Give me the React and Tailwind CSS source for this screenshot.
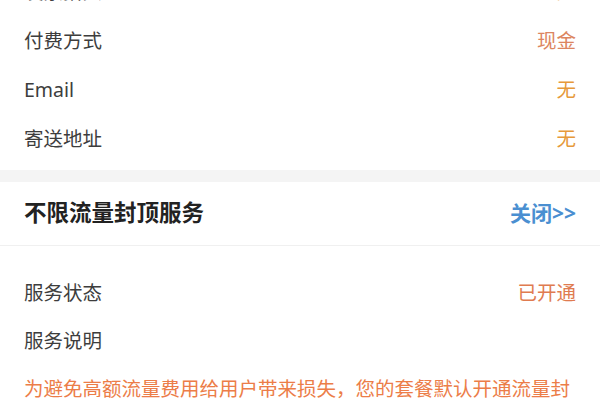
const rows = [
  { label: '发票抬头', value: '无', tone: 'text-[#e6993a]' },
  { label: '付费方式', value: '现金', tone: 'text-[#dc8560]' },
  { label: 'Email', value: '无', tone: 'text-[#e6993a]' },
  { label: '寄送地址', value: '无', tone: 'text-[#e6993a]' },
];

function Row({ label, value, tone, h = 'h-[49px]' }) {
  return (
    <div className={`flex items-center justify-between px-6 ${h}`}>
      <span className="text-[#3d3d3d]">{label}</span>
      {value && <span className={tone}>{value}</span>}
    </div>
  );
}

export default function App() {
  return (
    <div
      className="h-[400px] w-[600px] overflow-hidden bg-white text-[19.5px] leading-none"
      style={{ fontFamily: '"Noto Sans", "Noto Sans CJK SC", sans-serif' }}
    >
      <div className="-mt-[33px] pb-[7px]">
        {rows.map((row) => (
          <Row key={row.label} {...row} />
        ))}
      </div>

      <div className="h-[12px] bg-[#f4f4f4]" />

      <div className="flex h-[64px] items-center justify-between border-b border-[#f0f0f0] px-6">
        <span className="text-[22.5px] font-bold text-[#222]">不限流量封顶服务</span>
        <span className="text-[21px] font-bold text-[#4a8fd1]">关闭&gt;&gt;</span>
      </div>

      <div className="pt-[23px]">
        <Row label="服务状态" value="已开通" tone="text-[#e07b50]" h="h-[48px]" />
        <Row label="服务说明" h="h-[48px]" />
        <p className="mt-[9px] px-6 leading-[30px] text-[#ec7d48]">
          为避免高额流量费用给用户带来损失，您的套餐默认开通流量封顶服务，当月流量费用达到封顶值后将暂停上网。
        </p>
      </div>
    </div>
  );
}
